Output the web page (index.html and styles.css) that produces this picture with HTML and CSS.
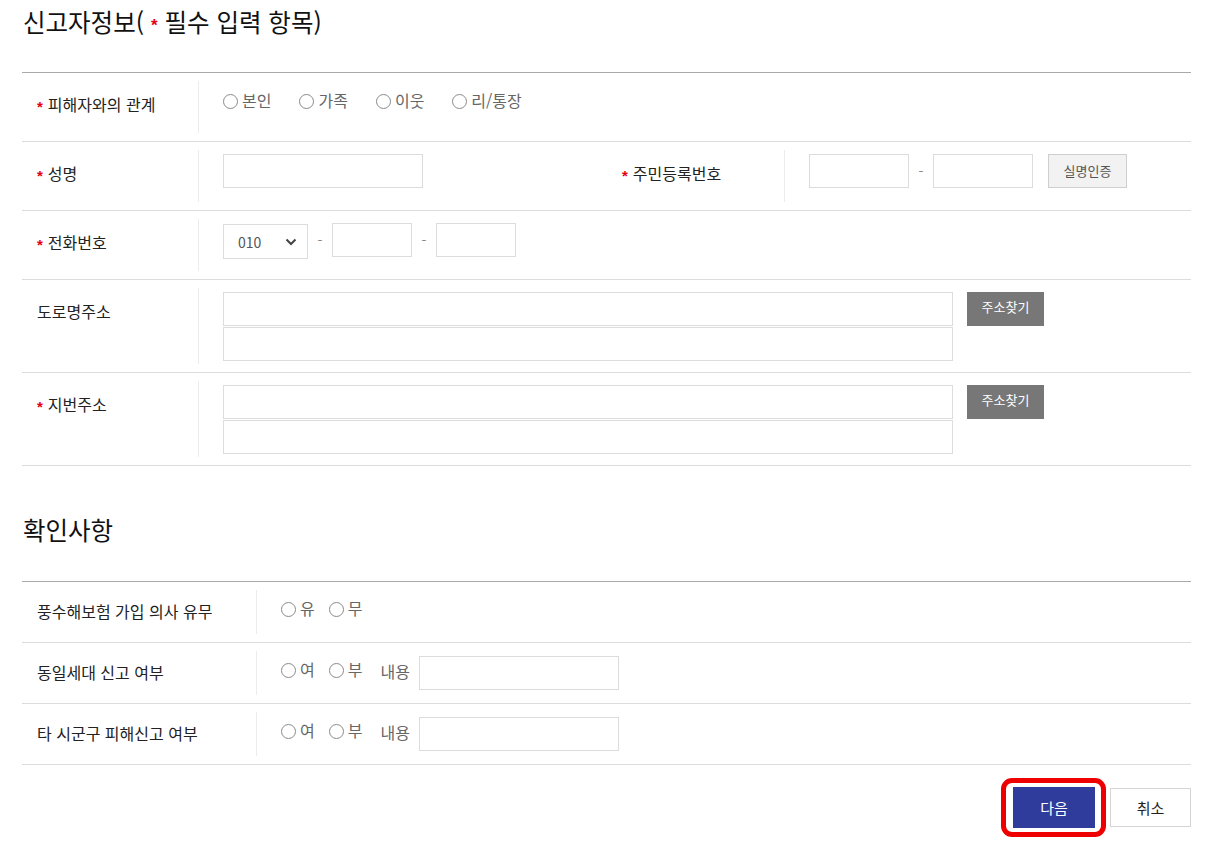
FILE: index.html
```html
<!DOCTYPE html>
<html lang="ko">
<head>
<meta charset="utf-8">
<title>신고자정보</title>
<link rel="stylesheet" href="styles.css">
</head>
<body>
<div class="page">
  <h2 class="sec-title sec-title-first">신고자정보(<span class="req req-title">*</span> 필수 입력 항목)</h2>
  <div class="form-table">
    <div class="row row-full">
      <div class="th"><span class="req">*</span>피해자와의 관계</div>
      <div class="td">
        <span class="radio">본인</span>
        <span class="radio">가족</span>
        <span class="radio">이웃</span>
        <span class="radio">리/통장</span>
      </div>
    </div>
    <div class="row">
      <div class="th"><span class="req">*</span>성명</div>
      <div class="td"><input class="inp inp-200" type="text"></div>
      <div class="th"><span class="req">*</span>주민등록번호</div>
      <div class="td">
        <input class="inp inp-100" type="text">
        <span class="dash">-</span>
        <input class="inp inp-100" type="text">
        <button class="btn-light" type="button">실명인증</button>
      </div>
    </div>
    <div class="row row-full">
      <div class="th"><span class="req">*</span>전화번호</div>
      <div class="td">
        <div class="select-box"><span>010</span>
          <svg width="12" height="8" viewBox="0 0 12 8"><path d="M1.5 1.5 L6 6 L10.5 1.5" fill="none" stroke="#444" stroke-width="2"/></svg>
        </div>
        <span class="dash">-</span>
        <input class="inp inp-80" type="text">
        <span class="dash">-</span>
        <input class="inp inp-80" type="text">
      </div>
    </div>
    <div class="row row-full">
      <div class="th">도로명주소</div>
      <div class="td">
        <div class="addr-stack">
          <input class="inp inp-addr" type="text">
          <input class="inp inp-addr" type="text">
        </div>
        <button class="btn-dark" type="button">주소찾기</button>
      </div>
    </div>
    <div class="row row-full">
      <div class="th"><span class="req">*</span>지번주소</div>
      <div class="td">
        <div class="addr-stack">
          <input class="inp inp-addr" type="text">
          <input class="inp inp-addr" type="text">
        </div>
        <button class="btn-dark" type="button">주소찾기</button>
      </div>
    </div>
  </div>

  <h2 class="sec-title sec-title-second">확인사항</h2>
  <div class="form-table form-table-2">
    <div class="row2">
      <div class="th2">풍수해보험 가입 의사 유무</div>
      <div class="td2">
        <span class="radio radio-sm">유</span>
        <span class="radio radio-sm">무</span>
      </div>
    </div>
    <div class="row2">
      <div class="th2">동일세대 신고 여부</div>
      <div class="td2">
        <span class="radio radio-sm">여</span>
        <span class="radio radio-sm">부</span>
        <span class="content-label">내용</span>
        <input class="inp inp-200" type="text">
      </div>
    </div>
    <div class="row2">
      <div class="th2">타 시군구 피해신고 여부</div>
      <div class="td2">
        <span class="radio radio-sm">여</span>
        <span class="radio radio-sm">부</span>
        <span class="content-label">내용</span>
        <input class="inp inp-200" type="text">
      </div>
    </div>
  </div>

  <div class="actions">
    <div class="next-wrap">
      <button class="btn-next" type="button">다음</button>
      <span class="highlight"></span>
    </div>
    <button class="btn-cancel" type="button">취소</button>
  </div>
</div>
</body>
</html>
```
FILE: styles.css
```css
* { box-sizing: border-box; }
body {
  margin: 0;
  background: #fff;
  font-family: "Noto Sans CJK KR", "Noto Sans", sans-serif;
  color: #222;
}
.page {
  width: 1191px;
  padding-left: 22px;
  padding-bottom: 21px;
}
.sec-title {
  margin: 0;
  height: 30px;
  font-size: 24.5px;
  line-height: 30px;
  font-weight: 400;
  color: #111;
  padding-left: 1px;
}
.sec-title-first { margin-top: 7px; margin-bottom: 35px; }
.sec-title-second { margin-top: 49px; margin-bottom: 36px; }
.req {
  color: #e60012;
  font-family: "Liberation Sans", sans-serif;
  font-weight: 700;
  font-size: 15px;
  line-height: 0;
  margin-right: 5px;
  position: relative;
  top: 1px;
}
.req-title { margin-left: 7px; margin-right: 0; font-size: 17px; top: -1px; }

.form-table { border-top: 1px solid #a9a9a9; }
.row {
  display: grid;
  grid-template-columns: 176px 409px 177px 407px;
  min-height: 69px;
  border-bottom: 1px solid #dcdcdc;
}
.row-full .td { grid-column: 2 / -1; }
.th {
  padding: 20px 0 0 15px;
  font-size: 16px;
  line-height: 22px;
  color: #222;
}
.td {
  margin: 8px 0;
  border-left: 1px solid #ececec;
  padding: 4px 0 3px 24px;
  display: flex;
  align-items: flex-start;
}
.radio {
  display: inline-flex;
  align-items: center;
  gap: 4px;
  font-size: 16px;
  line-height: 22px;
  color: #666;
  margin-right: 28px;
  padding-top: 4px;
}
.radio::before {
  content: "";
  width: 13px;
  height: 13px;
  border: 1px solid #8a8a8a;
  border-radius: 50%;
  margin-top: 2px;
}
.inp {
  height: 34px;
  border: 1px solid #dcdcdc;
  background: #fff;
  margin: 0;
  padding: 0 8px;
  font: inherit;
}
.inp-200 { width: 200px; }
.inp-100 { width: 100px; }
.inp-80 { width: 80px; }
.inp-addr { width: 730px; }
.dash {
  color: #888;
  font-size: 14px;
  line-height: 34px;
  width: 24px;
  text-align: center;
}
.btn-light {
  margin-left: 15px;
  width: 79px;
  height: 34px;
  border: 1px solid #cfcfcf;
  background: #f2f2f2;
  color: #555;
  font-family: inherit;
  font-size: 13px;
  padding: 0 0 2px;
}
.select-box {
  width: 85px;
  height: 35px;
  border: 1px solid #dcdcdc;
  display: flex;
  align-items: center;
  justify-content: space-between;
  padding: 0 10px 0 14px;
  font-size: 14px;
  color: #555;
  margin-top: 1px;
}
.select-box svg { display: block; }
.addr-stack {
  display: flex;
  flex-direction: column;
  gap: 1px;
}
.btn-dark {
  margin-left: 14px;
  width: 77px;
  height: 34px;
  border: 0;
  background: #777;
  color: #fff;
  font-family: inherit;
  font-size: 13px;
  padding: 0 0 6px;
}

.row2 {
  display: grid;
  grid-template-columns: 234px 1fr;
  min-height: 61px;
  border-bottom: 1px solid #dcdcdc;
}
.th2 {
  padding: 18px 0 0 15px;
  font-size: 16px;
  line-height: 22px;
  color: #222;
}
.td2 {
  margin: 8px 0;
  border-left: 1px solid #ececec;
  padding: 5px 0 5px 24px;
  display: flex;
  align-items: flex-start;
}
.radio-sm { margin-right: 14px; padding-top: 2px; }
.content-label {
  font-size: 16px;
  line-height: 22px;
  color: #666;
  padding-top: 4px;
  margin-left: 4px;
  margin-right: 9px;
}

.actions {
  display: flex;
  justify-content: flex-end;
  gap: 15px;
  margin-top: 22px;
}
.next-wrap { position: relative; }
.btn-next {
  display: block;
  width: 82px;
  height: 41px;
  border: 0;
  background: #2f3c9b;
  color: #fff;
  font-family: inherit;
  font-size: 15px;
}
.highlight {
  position: absolute;
  top: -9px;
  left: -12px;
  right: -11px;
  bottom: -9px;
  border: 5px solid #ee0000;
  border-radius: 11px;
  pointer-events: none;
}
.btn-cancel {
  width: 81px;
  height: 39px;
  margin-top: 1px;
  border: 1px solid #d5d5d5;
  background: #fff;
  color: #222;
  font-family: inherit;
  font-size: 15px;
}
```
